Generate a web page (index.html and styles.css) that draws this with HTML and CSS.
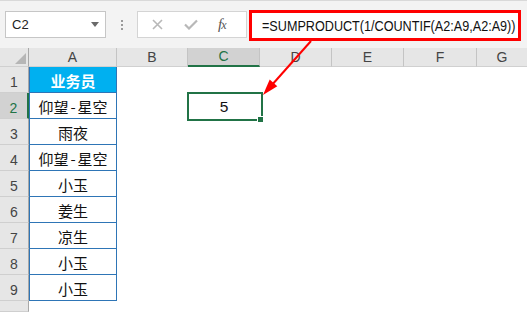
FILE: index.html
```html
<!DOCTYPE html>
<html lang="zh">
<head>
<meta charset="utf-8">
<title>SUMPRODUCT</title>
<link rel="stylesheet" href="styles.css">
</head>
<body>
<div class="toolbar">
  <div class="namebox"><span>C2</span><span class="caret"></span></div>
  <div class="grip"><i></i><i></i><i></i></div>
  <div class="fxbox">
    <svg class="ico-x" width="11" height="11" viewBox="0 0 11 11"><path d="M1 1L10 10M10 1L1 10" stroke="#b8b8b8" stroke-width="1.6" fill="none"/></svg>
    <svg class="ico-ok" width="14" height="11" viewBox="0 0 14 11"><path d="M1 5.5L5 9.5L13 1.5" stroke="#b8b8b8" stroke-width="2.2" fill="none"/></svg>
    <span class="fx">f<small>x</small></span>
  </div>
  <div class="formula"><span class="ftext">=SUMPRODUCT(1/COUNTIF(A2:A9,A2:A9))</span></div>
</div>

<div class="sheet">
  <div class="hd corner"><span class="tri"></span></div>
  <div class="hd col">A</div>
  <div class="hd col">B</div>
  <div class="hd col sel">C</div>
  <div class="hd col">D</div>
  <div class="hd col">E</div>
  <div class="hd col">F</div>
  <div class="hd col last">G</div>

  <div class="hd rh">1</div><div class="a head">业务员</div><div></div><div></div><div></div><div></div><div></div><div></div>
  <div class="hd rh sel">2</div><div class="a">仰望<span class="dash">-</span>星空</div><div></div><div class="cell active">5<span class="box"></span><span class="handle"></span></div><div></div><div></div><div></div><div></div>
  <div class="hd rh">3</div><div class="a">雨夜</div><div></div><div></div><div></div><div></div><div></div><div></div>
  <div class="hd rh">4</div><div class="a">仰望<span class="dash">-</span>星空</div><div></div><div></div><div></div><div></div><div></div><div></div>
  <div class="hd rh">5</div><div class="a">小玉</div><div></div><div></div><div></div><div></div><div></div><div></div>
  <div class="hd rh">6</div><div class="a">姜生</div><div></div><div></div><div></div><div></div><div></div><div></div>
  <div class="hd rh">7</div><div class="a">凉生</div><div></div><div></div><div></div><div></div><div></div><div></div>
  <div class="hd rh">8</div><div class="a">小玉</div><div></div><div></div><div></div><div></div><div></div><div></div>
  <div class="hd rh">9</div><div class="a">小玉</div><div></div><div></div><div></div><div></div><div></div><div></div>
  <div class="hd rh"></div><div></div><div></div><div></div><div></div><div></div><div></div><div></div>
</div>

<svg class="arrow" width="527" height="312" viewBox="0 0 527 312">
  <line x1="311" y1="41" x2="271" y2="86" stroke="#ff0000" stroke-width="2"/>
  <polygon points="263,95 269.7,79.6 277.3,86.2" fill="#ff0000"/>
</svg>
</body>
</html>
```
FILE: styles.css
```css
html, body {
  margin: 0;
  padding: 0;
}
body {
  width: 527px;
  height: 312px;
  overflow: hidden;
  position: relative;
  background: #ffffff;
  font-family: "Liberation Sans", Arial, sans-serif;
  color: #000;
}

/* ---------- formula bar ---------- */
.toolbar {
  height: 48px;
  box-sizing: border-box;
  background: #f3f3f3;
  border-top: 1px solid #d9d9d9;
  display: flex;
  align-items: flex-start;
}
.namebox {
  margin: 10px 0 0 5px;
  width: 101px;
  height: 27px;
  box-sizing: border-box;
  border: 1px solid #c6c6c6;
  background: #fff;
  display: flex;
  align-items: center;
  justify-content: space-between;
  padding: 0 6px 0 6px;
  font-size: 13px;
  color: #222;
}
.caret {
  width: 0;
  height: 0;
  border-left: 4px solid transparent;
  border-right: 4px solid transparent;
  border-top: 5px solid #6a6a6a;
}
.grip {
  margin: 19px 0 0 15px;
  display: flex;
  flex-direction: column;
  gap: 2px;
}
.grip i {
  display: block;
  width: 2px;
  height: 2px;
  background: #9a9a9a;
}
.fxbox {
  margin: 10px 0 0 14px;
  width: 110px;
  height: 27px;
  box-sizing: border-box;
  border: 1px solid #d4d4d4;
  background: #fff;
  display: flex;
  align-items: center;
  padding-left: 14px;
}
.ico-x { margin-right: 21px; }
.ico-ok { margin-right: 20px; }
.fx {
  font-family: "Liberation Serif", "Times New Roman", serif;
  font-style: italic;
  font-size: 15px;
  color: #555;
  letter-spacing: -1px;
}
.fx small { font-size: 12px; }
.formula {
  margin: 9px 0 0 2px;
  width: 272px;
  height: 31px;
  box-sizing: border-box;
  border: 3px solid #ff0000;
  background: #fff;
  padding-left: 10px;
  display: flex;
  align-items: center;
  overflow: hidden;
  white-space: nowrap;
  color: #111;
}
.ftext {
  display: inline-block;
  font-family: "Liberation Sans", Arial, sans-serif;
  font-size: 15.4px;
  transform: scaleX(0.82);
  transform-origin: left center;
}

/* ---------- sheet ---------- */
.sheet {
  display: grid;
  grid-template-columns: 29px 88px 71px 72px 72px 72px 73px 50px;
  grid-template-rows: 19px repeat(9, 26px) 11px;
}
.hd {
  background: #e6e6e6;
  box-sizing: border-box;
  color: #444;
  font-size: 14px;
  display: flex;
  justify-content: center;
  align-items: flex-end;
}
.col {
  border-right: 1px solid #c4c4c4;
  border-bottom: 1px solid #d0d0d0;
  padding-bottom: 1px;
}
.col.last { border-right: none; }
.corner {
  border-right: 1px solid #a8a8a8;
  border-bottom: 1px solid #d0d0d0;
  position: relative;
}
.tri {
  position: absolute;
  right: 2px;
  bottom: 2px;
  width: 0;
  height: 0;
  border-left: 11px solid transparent;
  border-bottom: 11px solid #b6b6b6;
}
.rh {
  border-right: 1px solid #a8a8a8;
  border-bottom: 1px solid #cfcfcf;
  padding-bottom: 2px;
  font-size: 14px;
}
.hd.sel {
  background: #d2d2d2;
  color: #217346;
}
.col.sel {
  border-bottom: 2px solid #217346;
}
.rh.sel {
  border-right: 2px solid #217346;
}

.a {
  box-sizing: border-box;
  border-left: 1px solid #2e75b6;
  border-right: 1px solid #2e75b6;
  border-bottom: 1px solid #2e75b6;
  display: flex;
  align-items: center;
  justify-content: center;
  padding-top: 1px;
  font-family: "Noto Sans CJK SC", "Liberation Sans", sans-serif;
  font-size: 15px;
  color: #111;
}
.a.head {
  background: #00b0f0;
  color: #fff;
  font-weight: bold;
}
.dash {
  margin: 0 2px;
}

.cell.active {
  position: relative;
  display: flex;
  align-items: center;
  justify-content: center;
  padding-top: 2px;
  box-sizing: border-box;
  font-family: "Liberation Sans", Arial, sans-serif;
  font-size: 15.5px;
  color: #111;
}
.box {
  position: absolute;
  left: -1px;
  top: -1px;
  right: -3px;
  bottom: -2px;
  border: 2px solid #217346;
}
.handle {
  position: absolute;
  right: -4px;
  bottom: -4px;
  width: 5px;
  height: 5px;
  background: #217346;
  border: 1px solid #fff;
}

.arrow {
  position: absolute;
  left: 0;
  top: 0;
  pointer-events: none;
}
```
